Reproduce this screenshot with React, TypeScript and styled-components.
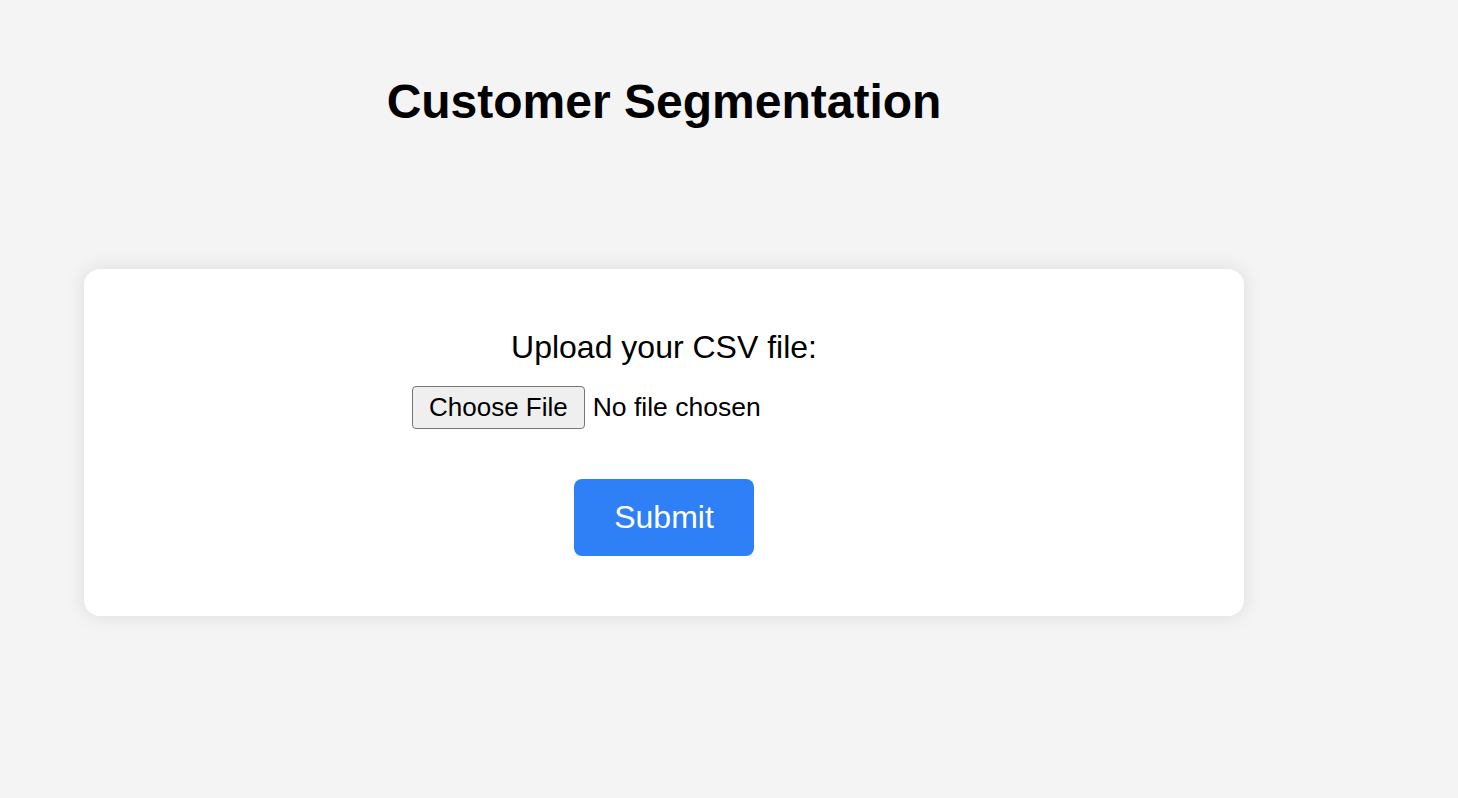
import React from "react";
import styled, { createGlobalStyle } from "styled-components";

const GlobalStyle = createGlobalStyle`
  html, body {
    margin: 0;
    padding: 0;
    background: #f4f4f4;
    font-family: "Liberation Sans", Arial, sans-serif;
  }
`;

const Page = styled.div`
  min-height: 798px;
  box-sizing: border-box;
  padding: 74px 0 0 84px;
`;

const Container = styled.div`
  width: 1160px;
  display: flex;
  flex-direction: column;
  align-items: center;
`;

const Title = styled.h1`
  margin: 0 0 140px;
  font-size: 48px;
  font-weight: bold;
  color: #000;
  text-align: center;
`;

const Card = styled.form`
  width: 100%;
  box-sizing: border-box;
  background: #fff;
  border-radius: 16px;
  box-shadow: 0 0 20px rgba(0, 0, 0, 0.1);
  padding: 60px 0 60px;
  display: flex;
  flex-direction: column;
  align-items: center;
`;

const Label = styled.label`
  font-size: 32px;
  color: #000;
  margin-bottom: 20px;
`;

const FileInput = styled.input`
  width: 504px;
  font-family: "Liberation Sans", Arial, sans-serif;
  font-size: 26.5px;
  color: #000;
  margin: 0 0 50px;

  &::file-selector-button {
    font-family: "Liberation Sans", Arial, sans-serif;
    font-size: 26px;
    color: #000;
    background: #efefef;
    border: 1.5px solid #767676;
    border-radius: 4px;
    padding: 5px 16px;
    margin-right: 8px;
  }
`;

const SubmitButton = styled.button`
  font-family: "Liberation Sans", Arial, sans-serif;
  font-size: 32px;
  color: #fff;
  background: #2f80f7;
  border: none;
  border-radius: 8px;
  padding: 20px 40px;
  cursor: pointer;
`;

export default function App() {
  return (
    <>
      <GlobalStyle />
      <Page>
        <Container>
          <Title>Customer Segmentation</Title>
          <Card onSubmit={(e) => e.preventDefault()}>
            <Label htmlFor="csv">Upload your CSV file:</Label>
            <FileInput id="csv" type="file" accept=".csv" />
            <SubmitButton type="submit">Submit</SubmitButton>
          </Card>
        </Container>
      </Page>
    </>
  );
}
